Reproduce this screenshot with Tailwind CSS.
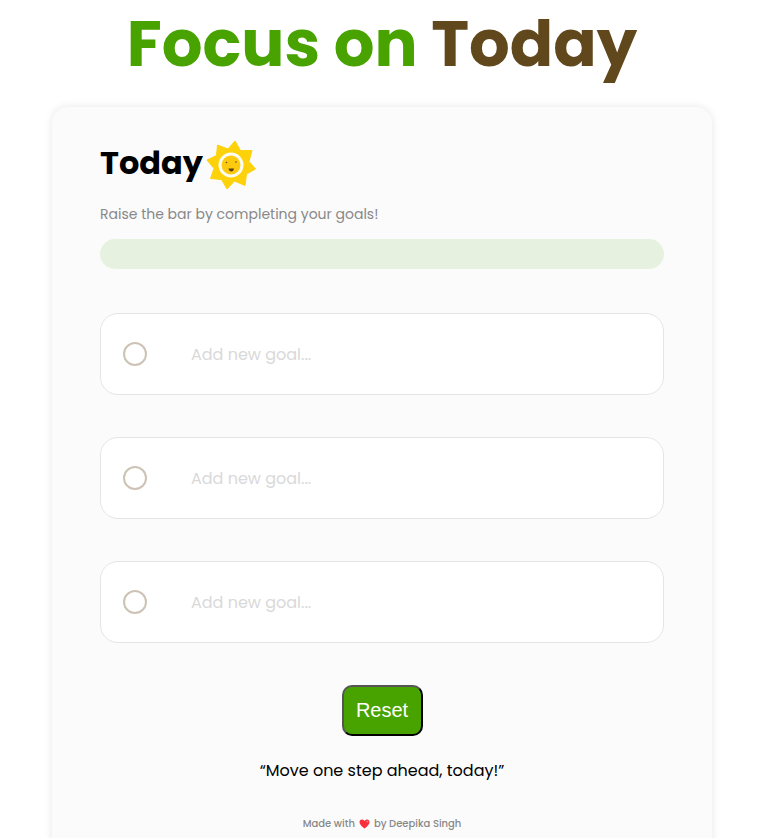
<!DOCTYPE html>
<html lang="en">
<head>
<meta charset="utf-8">
<meta name="viewport" content="width=device-width, initial-scale=1">
<title>Focus on Today</title>
<script src="https://cdn.jsdelivr.net/npm/@tailwindcss/browser@4"></script>
</head>
<body class="flex h-screen flex-col overflow-hidden bg-white pr-[45px] pl-[52px] font-['Poppins','Inter',sans-serif] text-black">
  <h1 class="pt-1 text-center text-[64px] leading-[80px] font-bold whitespace-nowrap text-[#48a300]">Focus on <span class="text-[#60481c]">Today</span></h1>
  <main class="mx-auto mt-[23px] w-full max-w-[660px] shrink-0 rounded-2xl bg-[#fbfbfb] px-12 pt-[33px] pb-8 shadow-[0_0_8px_rgba(0,0,0,0.1)]">
    <div class="flex h-[50px] items-start gap-[3px]">
      <h2 class="text-[32px] leading-[46px] font-bold">Today</h2>
      <svg class="size-[50px]" viewBox="0 0 50 50" aria-hidden="true">
        <path d="M29 1 L34.500 10.500 L46 10.500 L43 21.500 L49.500 29 L40.500 34 L39 45.500 L28.500 41 L21 49 L15.500 39.500 L4.500 38.500 L8 28.500 L1 20 L10.500 15.500 L11.500 5 L22 9 Z" fill="#fdd20b" stroke="#fdd20b" stroke-width="1" stroke-linejoin="round"/>
        <circle cx="25" cy="25" r="11" fill="#fccb10" stroke="#fffdf2" stroke-width="3"/>
        <circle cx="20.500" cy="22.500" r="0.800" fill="#5c4a16"/>
        <circle cx="30" cy="22" r="0.800" fill="#5c4a16"/>
        <path d="M22.500 28.500 H28 Q27.500 31.500 25.500 31.500 Q23 31.500 22.500 28.500 Z" fill="#5c3d16"/>
      </svg>
    </div>
    <p class="mt-[13px] text-sm leading-[22px] text-[#888]">Raise the bar by completing your goals!</p>
    <div class="mt-[14px] h-[30px] rounded-full bg-[#e6f2df]" role="progressbar" aria-label="Goals completed" aria-valuenow="0" aria-valuemin="0" aria-valuemax="3"></div>
    <form>
      <div class="mt-11 flex flex-col gap-[42px]">
        <div class="flex h-[82px] items-center gap-11 rounded-[18px] border border-[#e5e5e5] bg-white px-[22px]">
          <input type="checkbox" aria-label="Complete goal 1" class="size-6 shrink-0 appearance-none rounded-full border-2 border-[#cdc3b5]">
          <input type="text" aria-label="Goal 1" placeholder="Add new goal..." class="min-w-0 flex-1 pt-0.5 text-base outline-none placeholder:text-[#d9d9d9]">
        </div>
        <div class="flex h-[82px] items-center gap-11 rounded-[18px] border border-[#e5e5e5] bg-white px-[22px]">
          <input type="checkbox" aria-label="Complete goal 2" class="size-6 shrink-0 appearance-none rounded-full border-2 border-[#cdc3b5]">
          <input type="text" aria-label="Goal 2" placeholder="Add new goal..." class="min-w-0 flex-1 pt-0.5 text-base outline-none placeholder:text-[#d9d9d9]">
        </div>
        <div class="flex h-[82px] items-center gap-11 rounded-[18px] border border-[#e5e5e5] bg-white px-[22px]">
          <input type="checkbox" aria-label="Complete goal 3" class="size-6 shrink-0 appearance-none rounded-full border-2 border-[#cdc3b5]">
          <input type="text" aria-label="Goal 3" placeholder="Add new goal..." class="min-w-0 flex-1 pt-0.5 text-base outline-none placeholder:text-[#d9d9d9]">
        </div>
      </div>
      <button type="reset" class="mx-auto mt-[42px] block h-[51px] w-[81px] rounded-[10px] border-2 border-t-[#555] border-r-black border-b-black border-l-[#555] bg-[#48a300] pb-0.5 font-['Liberation_Sans',sans-serif] text-xl text-white">Reset</button>
    </form>
    <p class="mt-[23px] text-center text-base leading-6">“Move one step ahead, today!”</p>
    <footer class="mt-8 flex items-center justify-center gap-1 text-[10px] leading-[18px] font-medium text-[#888]">
      <span>Made with</span>
      <svg class="h-[10px] w-[11px]" viewBox="0 0 11 10" role="img" aria-label="love">
        <path d="M5.500 9.500 C2 7 0.500 5 0.500 3 C0.500 0 4 -0.300 5.500 2 C7 -0.300 10.500 0 10.500 3 C10.500 5 9 7 5.500 9.500 Z" fill="#f92f3c"/>
        <ellipse cx="8.200" cy="2.600" rx="1.100" ry="0.800" fill="#ff7a76"/>
      </svg>
      <span>by Deepika Singh</span>
    </footer>
  </main>
</body>
</html>
